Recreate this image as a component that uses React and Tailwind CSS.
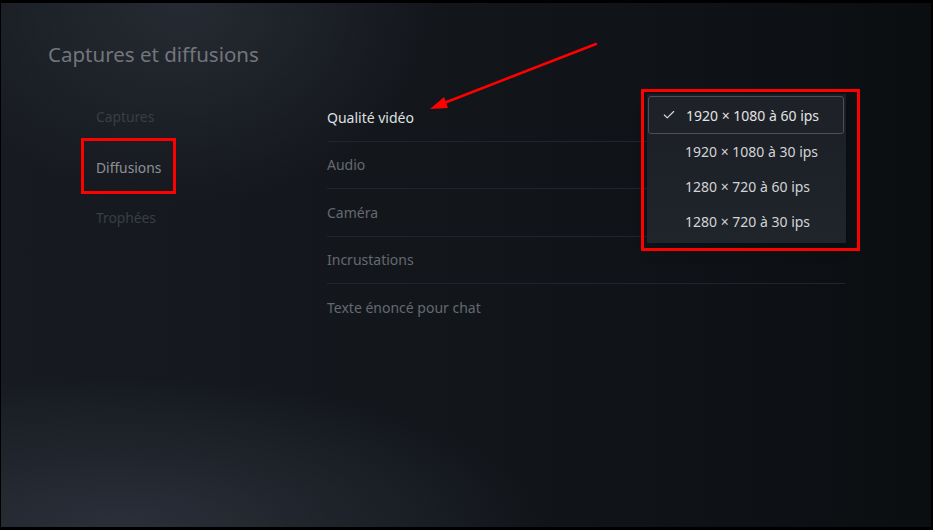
import React from "react";
import { Check } from "lucide-react";

const navItems = [
  { name: "Captures", active: false },
  { name: "Diffusions", active: true },
  { name: "Trophées", active: false },
];

const rows = ["Qualité vidéo", "Audio", "Caméra", "Incrustations", "Texte énoncé pour chat"];

const options = [
  "1920 × 1080 à 60 ips",
  "1920 × 1080 à 30 ips",
  "1280 × 720 à 60 ips",
  "1280 × 720 à 30 ips",
];

export default function App() {
  return (
    <div className="w-[933px] h-[530px] bg-black pt-[3px] pl-[1px] font-['Noto_Sans',sans-serif]">
      <div className="relative w-[930px] h-[524px] overflow-hidden bg-[radial-gradient(ellipse_260px_200px_at_180px_0px,#262a32_0%,transparent_100%),radial-gradient(ellipse_420px_150px_at_120px_524px,#2a303a_0%,transparent_100%),linear-gradient(90deg,#171b21_0%,#12161b_50%,#0b0e11_100%)] pl-[47px] pt-[37px]">
        <h1 className="text-[20.5px] leading-7 text-[#72767c]">Captures et diffusions</h1>

        <div className="flex mt-[26px]">
          {/* left nav */}
          <ul className="w-[279px] pl-[48px] pt-[12px] flex flex-col gap-[29.5px]">
            {navItems.map((item) => (
              <li
                key={item.name}
                className={`text-[13.8px] leading-[21px] ${item.active ? "text-[#8e9196]" : "text-[#3a3e45]"}`}
              >
                {item.name}
              </li>
            ))}
          </ul>

          {/* settings list */}
          <ul className="w-[518px]">
            {rows.map((row, i) => (
              <li
                key={row}
                className={`h-[47.5px] flex items-center text-[14px] ${
                  i === 0 ? "text-[#dfe0e2]" : "text-[#65696f]"
                } ${i < rows.length - 1 ? "border-b border-[#21252b]" : ""}`}
              >
                {row}
              </li>
            ))}
          </ul>
        </div>

        {/* dropdown */}
        <div className="absolute left-[646px] top-[91px] w-[199px] h-[149px] bg-[linear-gradient(180deg,#1b1f25,#20252b)] shadow-lg">
          {options.map((opt, i) => (
            <div
              key={opt}
              className={`flex items-center text-[14px] text-[#d2d4d7] ${
                i === 0
                  ? "h-[38px] ml-[1px] mr-[2px] mt-[2px] border border-[#4b5058] rounded-[3px] bg-[#1e2228] text-[#e2e3e5]"
                  : "h-[35px]"
              }`}
            >
              <span className={`flex justify-center ${i === 0 ? "w-[37px] pl-[3px]" : "w-[38px]"}`}>
                {i === 0 && <Check size={14} strokeWidth={2} className="text-[#d8dadd]" />}
              </span>
              {opt}
            </div>
          ))}
        </div>

        {/* annotations */}
        <div className="absolute left-[80px] top-[135px] w-[95px] h-[56px] border-[3px] border-[#ff0000]" />
        <div className="absolute left-[640px] top-[86px] w-[219px] h-[162px] border-[3px] border-[#ff0000]" />
        <svg className="absolute left-0 top-0" width="930" height="524">
          <line x1="595" y1="41" x2="438" y2="102" stroke="#ff0000" strokeWidth="2.5" strokeLinecap="round" />
          <polygon points="429,106 443,94 447,105" fill="#ff0000" />
        </svg>
      </div>
    </div>
  );
}
